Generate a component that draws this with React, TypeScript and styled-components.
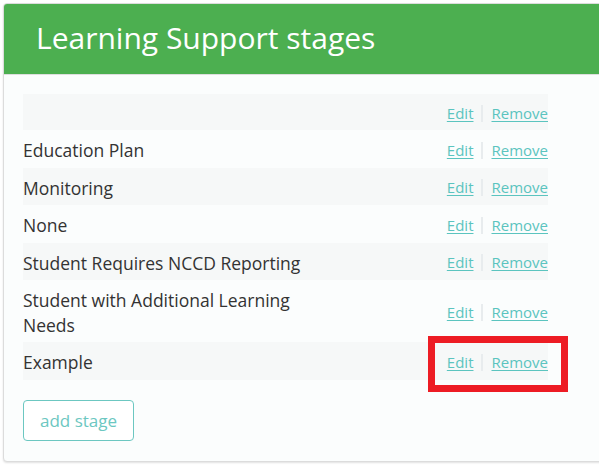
import React from "react";
import styled, { createGlobalStyle } from "styled-components";

const Global = createGlobalStyle`
  html, body { margin: 0; padding: 0; background: #ffffff; }
  body { font-family: "Open Sans", "Noto Sans", sans-serif; overflow: hidden; }
`;

const Page = styled.div`
  position: relative;
  padding: 3px 0 10px 3px;
  width: 100%;
  box-sizing: border-box;
  overflow: hidden;
`;

const Panel = styled.section`
  width: calc(100% + 30px);
  border: 1px solid #dcdcdc;
  border-radius: 4px;
  background: #fbfdfd;
  box-shadow: 0 1px 2px rgba(0, 0, 0, 0.12);
  overflow: hidden;
`;

const Header = styled.header`
  background: #4caf50;
  height: 70px;
  border-bottom: 1px solid #dedede;
  display: flex;
  align-items: center;
  padding-left: 32px;
`;

const Title = styled.h2`
  margin: 0;
  color: #ffffff;
  font-weight: 400;
  font-size: 30px;
  line-height: 1;
  padding-bottom: 2px;
`;

const Body = styled.div`
  padding: 19px 19px 20px 19px;
`;

const Table = styled.table`
  width: 525px;
  border-collapse: collapse;
`;

const Row = styled.tr<{ $striped: boolean }>`
  background: ${(p) => (p.$striped ? "#f6f8f8" : "transparent")};
`;

const NameCell = styled.td`
  padding: 8px 0 5px 0;
  width: 300px;
  font-size: 17.5px;
  line-height: 24.5px;
  color: #333333;
  vertical-align: middle;
`;

const ActionCell = styled.td`
  padding: 8px 0 6px 0;
  text-align: right;
  vertical-align: middle;
  white-space: nowrap;
  font-size: 15px;
  line-height: 22px;
`;

const ActionLink = styled.a`
  color: #5bc4bf;
  text-decoration: underline;
  text-underline-offset: 2px;
  cursor: pointer;
`;

const Sep = styled.span`
  display: inline-block;
  width: 2px;
  height: 17px;
  background: #e8ecee;
  margin: 0 8px 0 8px;
  vertical-align: -3px;
`;

const AddButton = styled.button`
  margin-top: 20px;
  height: 41px;
  padding: 0 16px;
  border: 1px solid #6cc7c1;
  border-radius: 4px;
  background: #ffffff;
  color: #6cc7c1;
  font-family: "Open Sans", "Noto Sans", sans-serif;
  font-size: 17px;
  cursor: pointer;
`;

const Highlight = styled.div`
  position: absolute;
  left: 428px;
  top: 336px;
  width: 140px;
  height: 56px;
  box-sizing: border-box;
  border: 7px solid #ed1c24;
  pointer-events: none;
`;

const stages = [
  "",
  "Education Plan",
  "Monitoring",
  "None",
  "Student Requires NCCD Reporting",
  "Student with Additional Learning Needs",
  "Example",
];

export default function App() {
  return (
    <>
      <Global />
      <Page>
        <Panel>
          <Header>
            <Title>Learning Support stages</Title>
          </Header>
          <Body>
            <Table>
              <tbody>
                {stages.map((s, i) => (
                  <Row key={i} $striped={i % 2 === 0}>
                    <NameCell>{s}</NameCell>
                    <ActionCell>
                      <ActionLink>Edit</ActionLink>
                      <Sep />
                      <ActionLink>Remove</ActionLink>
                    </ActionCell>
                  </Row>
                ))}
              </tbody>
            </Table>
            <AddButton>add stage</AddButton>
          </Body>
        </Panel>
        <Highlight />
      </Page>
    </>
  );
}
